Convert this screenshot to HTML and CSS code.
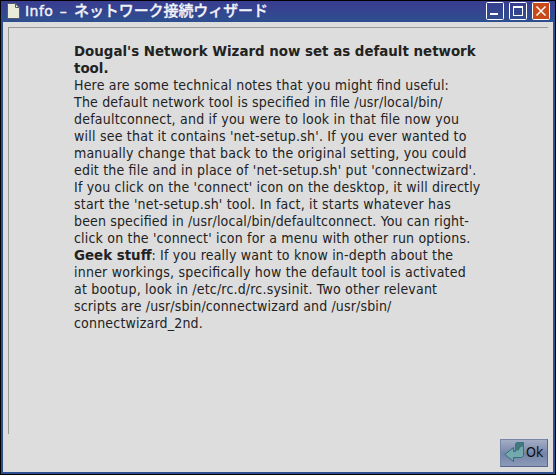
FILE: index.html
```
<!DOCTYPE html>
<html lang="ja">
<head>
<meta charset="utf-8">
<title>Info – ネットワーク接続ウィザード</title>
<link rel="stylesheet" href="styles.css">
</head>
<body>
<div class="window">
  <header class="titlebar">
    <svg class="doc" width="13" height="16" viewBox="0 0 13 16"><path d="M.5.5h8l4 4v11H.5z" fill="#e9ead7" stroke="#555a66"/><path d="M8.500 1v3.500h3.500z" fill="#fff" stroke="#555a66"/></svg>
    <h1 class="title"><span class="latin">Info – </span><span class="jp">ネットワーク接続ウィザード</span></h1>
    <div class="controls">
      <button class="ctl" aria-label="Minimize"><svg width="18" height="18"><rect x=".5" y=".5" width="17" height="17" rx="1"/><path class="fill" d="M4 11h8v2H4z"/></svg></button>
      <button class="ctl" aria-label="Maximize"><svg width="18" height="18"><rect x=".5" y=".5" width="17" height="17" rx="1"/><path class="fill" fill-rule="evenodd" d="M4 4h10v10H4zM5 6v7h8V6z"/></svg></button>
      <button class="ctl close" aria-label="Close"><svg width="18" height="18"><rect x=".5" y=".5" width="17" height="17" rx="1"/><path d="M4.500 4.500l9 9m0-9l-9 9" stroke-width="1.500"/></svg></button>
    </div>
  </header>
  <main class="body">
    <div class="pane">
      <div class="text">
        <p class="bold">Dougal's Network Wizard now set as default network</p>
        <p class="bold">tool.</p>
        <p>Here are some technical notes that you might find useful:</p>
        <p>The default network tool is specified in file /usr/local/bin/</p>
        <p class="wide">defaultconnect, and if you were to look in that file now you</p>
        <p class="wide">will see that it contains 'net-setup.sh'. If you ever wanted to</p>
        <p>manually change that back to the original setting, you could</p>
        <p>edit the file and in place of 'net-setup.sh' put 'connectwizard'.</p>
        <p>If you click on the 'connect' icon on the desktop, it will directly</p>
        <p>start the 'net-setup.sh' tool. In fact, it starts whatever has</p>
        <p class="tight">been specified in /usr/local/bin/defaultconnect. You can right-</p>
        <p>click on the 'connect' icon for a menu with other run options.</p>
        <p><b class="bold">Geek stuff</b>: If you really want to know in-depth about the</p>
        <p class="wide">inner workings, specifically how the default tool is activated</p>
        <p>at bootup, look in /etc/rc.d/rc.sysinit. Two other relevant</p>
        <p class="tight">scripts are /usr/sbin/connectwizard and /usr/sbin/</p>
        <p>connectwizard_2nd.</p>
      </div>
    </div>
    <button class="ok"><svg width="20" height="22" viewBox="0 0 20 22"><path d="M11.500 2.500q0-2 2-2h6v13l-2 2H9.500v4L.8 12.500 9.500 5.500v4h2z" fill="#73a9ac" stroke="#346f7c"/><path d="M11.500 2.500q0-2 2-2h6v4l-3 .5-2 3.500h-3z" fill="#41777f"/></svg><span>Ok</span></button>
  </main>
</div>
</body>
</html>
```
FILE: styles.css
```
* { box-sizing: border-box; }
body { margin: 0; background: #000; }
button { padding: 0; border: 0; background: none; }
.window {
  width: 556px; height: 475px;
  padding: 1px 3px 3px;
  border-radius: 4px;
  background: linear-gradient(90deg, #000 1px, transparent 1px 555px, #000 555px), linear-gradient(#000 1px, #393c90 1px, #2e4f8f 22px, #2e4f8f 474px, #000 474px);
  overflow: hidden;
}
.titlebar { display: flex; height: 21px; padding: 2px 2px 0 4px; align-items: flex-start; }
.doc { flex: none; }
.title {
  margin: -1px 0 0 5px; flex: 1; color: #f2f3f8; white-space: pre;
  font: bold 14px/18px "DejaVu Sans", "Noto Sans CJK JP", sans-serif;
}
.latin { display: inline-block; width: 49px; font-weight: normal; letter-spacing: .45px; word-spacing: 1.5px; -webkit-text-stroke: .4px #f2f3f8; }
.jp { font-family: "Noto Sans CJK JP", sans-serif; font-weight: 500; font-size: 15px; line-height: 1; letter-spacing: -.08px; -webkit-text-stroke: .3px #f2f3f8; }
.controls { display: flex; gap: 5px; margin: -1px 1px 0 0; }
.ctl { width: 18px; height: 18px; display: block; }
.ctl svg { display: block; fill: none; stroke: #fff; }
.ctl .fill { fill: #fff; stroke: none; }
.close rect { fill: #c84a18; }
.body { height: 450px; padding: 5px; background: #ddd; display: flex; flex-direction: column; align-items: flex-end; }
.pane { width: 540px; height: 407px; padding: 15px 0 0 65px; border: solid #999; border-width: 1px 0 0 1px; }
.text {
  color: #222; font: 14px/17px "DejaVu Sans Condensed", "DejaVu Sans", sans-serif;
  font-stretch: condensed; letter-spacing: .19px; font-feature-settings: "liga" 1;
}
.text p { margin: 0; white-space: nowrap; width: max-content; }
.text .wide { letter-spacing: .22px; }
.text .tight { letter-spacing: .15px; }
.text .bold { font-family: "DejaVu Sans", sans-serif; font-weight: bold; font-size: 13.4px; font-stretch: normal; letter-spacing: 0; line-height: 17px; }
.text b.bold { line-height: 1; }
.ok {
  width: 48px; height: 28px; margin-top: 5px; padding: 0 0 1px 3px;
  display: flex; align-items: center; gap: 2px;
  border: 1px solid; border-color: #7886a6 #55678e #55678e #7886a6; color: #111;
  background: linear-gradient(#a3adc5, #7888ab 50%, #7182a7 50%, #8d9bb9);
  font: 14px/17px "DejaVu Sans Condensed", "DejaVu Sans", sans-serif;
}
```
